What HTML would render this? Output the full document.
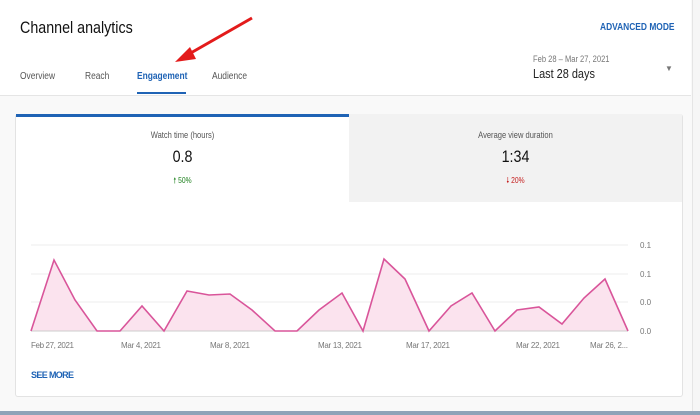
<!DOCTYPE html>
<html><head><style>
body{margin:0;width:700px;height:415px;overflow:hidden;background:#f9f9f9;font-family:"Liberation Sans",sans-serif;position:relative}
.hdr{position:absolute;left:0;top:0;width:691px;height:95px;background:#fff;border-bottom:1px solid #e5e5e5}
.a{position:absolute;white-space:nowrap}
.c{transform:scaleX(.84);transform-origin:left top}
.cc{transform:scaleX(.84);transform-origin:center top}
.card{position:absolute;left:15px;top:114px;width:666px;height:282px;background:#fff;border:1px solid #e3e3e3;border-top:none;border-radius:3px}
.sb{position:absolute;left:692px;top:0;width:8px;height:411px;background:#f6f6f6;border-left:1px solid #e5e5e5}
.tb{position:absolute;left:0;top:411px;width:700px;height:4px;background:#8fa3b8}
</style></head><body>
<div class="hdr">
<div class="a c" style="left:20px;top:18px;font-size:17px;color:#111">Channel analytics</div>
<div class="a c" style="left:600px;top:22px;font-size:10px;font-weight:bold;color:#1f63b5">ADVANCED MODE</div>
<div class="a c" style="left:20px;top:71px;font-size:10px;color:#555">Overview</div>
<div class="a c" style="left:85px;top:71px;font-size:10px;color:#555">Reach</div>
<div class="a c" style="left:137px;top:71px;font-size:10px;color:#1f63b5;font-weight:bold">Engagement</div>
<div style="position:absolute;left:137px;top:92px;width:49px;height:2px;background:#1f63b5"></div>
<div class="a c" style="left:212px;top:71px;font-size:10px;color:#555">Audience</div>
<div class="a c" style="left:533px;top:54px;font-size:9px;color:#777">Feb 28 – Mar 27, 2021</div>
<div class="a c" style="left:533px;top:66px;font-size:13px;color:#222">Last 28 days</div>
<div class="a" style="left:665px;top:64px;font-size:8px;color:#777">▼</div>
</div>
<svg class="a" style="left:170px;top:14px" width="90" height="52"><line x1="82" y1="4" x2="12" y2="44" stroke="#e31b1b" stroke-width="3"/><polygon points="5,48 20,33 26,45" fill="#e31b1b"/></svg>
<div class="card">
<div style="position:absolute;left:0;top:0;width:333px;height:3px;background:#1f63b5"></div>
<div style="position:absolute;left:333px;top:0;width:333px;height:88px;background:#f2f2f2"></div>
<div class="a cc" style="left:0;width:333px;text-align:center;top:16px;font-size:9px;color:#555">Watch time (hours)</div>
<div class="a cc" style="left:0;width:333px;text-align:center;top:33px;font-size:17px;color:#111">0.8</div>
<div class="a cc" style="left:0;width:333px;text-align:center;top:61px;font-size:8px;color:#1a7f1a">🠕 50%</div>
<div class="a cc" style="left:333px;width:333px;text-align:center;top:16px;font-size:9px;color:#555">Average view duration</div>
<div class="a cc" style="left:333px;width:333px;text-align:center;top:33px;font-size:17px;color:#111">1:34</div>
<div class="a cc" style="left:333px;width:333px;text-align:center;top:61px;font-size:8px;color:#c41a1a">🠗 20%</div>
</div>
<svg class="a" style="left:0;top:0" width="700" height="415">
<g stroke="#eee" stroke-width="1"><line x1="31" y1="245" x2="628" y2="245"/><line x1="31" y1="274" x2="628" y2="274"/><line x1="31" y1="302" x2="628" y2="302"/></g>
<polygon fill="#fbe3ee" points="31,331 54,260 75,300 97,331 120,331 142,306 164,331 187,291 209,295 230,294 252,310 275,331 297,331 319,310 342,293 363,331 384,259 405,279 429,331 451,306 472,293 495,331 517,310 539,307 562,324 584,298 605,279 628,331"/>
<line x1="31" y1="331" x2="628" y2="331" stroke="#ccc"/>
<polyline fill="none" stroke="#d9559a" stroke-width="1.6" points="31,331 54,260 75,300 97,331 120,331 142,306 164,331 187,291 209,295 230,294 252,310 275,331 297,331 319,310 342,293 363,331 384,259 405,279 429,331 451,306 472,293 495,331 517,310 539,307 562,324 584,298 605,279 628,331"/>
<g font-size="8" fill="#777" font-family="Liberation Sans" textLength="0"><text x="640" y="248">0.1</text><text x="640" y="277">0.1</text><text x="640" y="305">0.0</text><text x="640" y="334">0.0</text>
<text x="31" y="348" textLength="43">Feb 27, 2021</text><text x="121" y="348" textLength="40">Mar 4, 2021</text><text x="210" y="348" textLength="40">Mar 8, 2021</text><text x="318" y="348" textLength="44">Mar 13, 2021</text><text x="406" y="348" textLength="44">Mar 17, 2021</text><text x="516" y="348" textLength="44">Mar 22, 2021</text><text x="590" y="348" textLength="38">Mar 26, 2...</text></g>
<text x="31" y="378" font-size="9" font-weight="bold" fill="#1f63b5" font-family="Liberation Sans" textLength="43">SEE MORE</text>
</svg>
<div class="sb"></div>
<div class="tb"></div>
</body></html>
